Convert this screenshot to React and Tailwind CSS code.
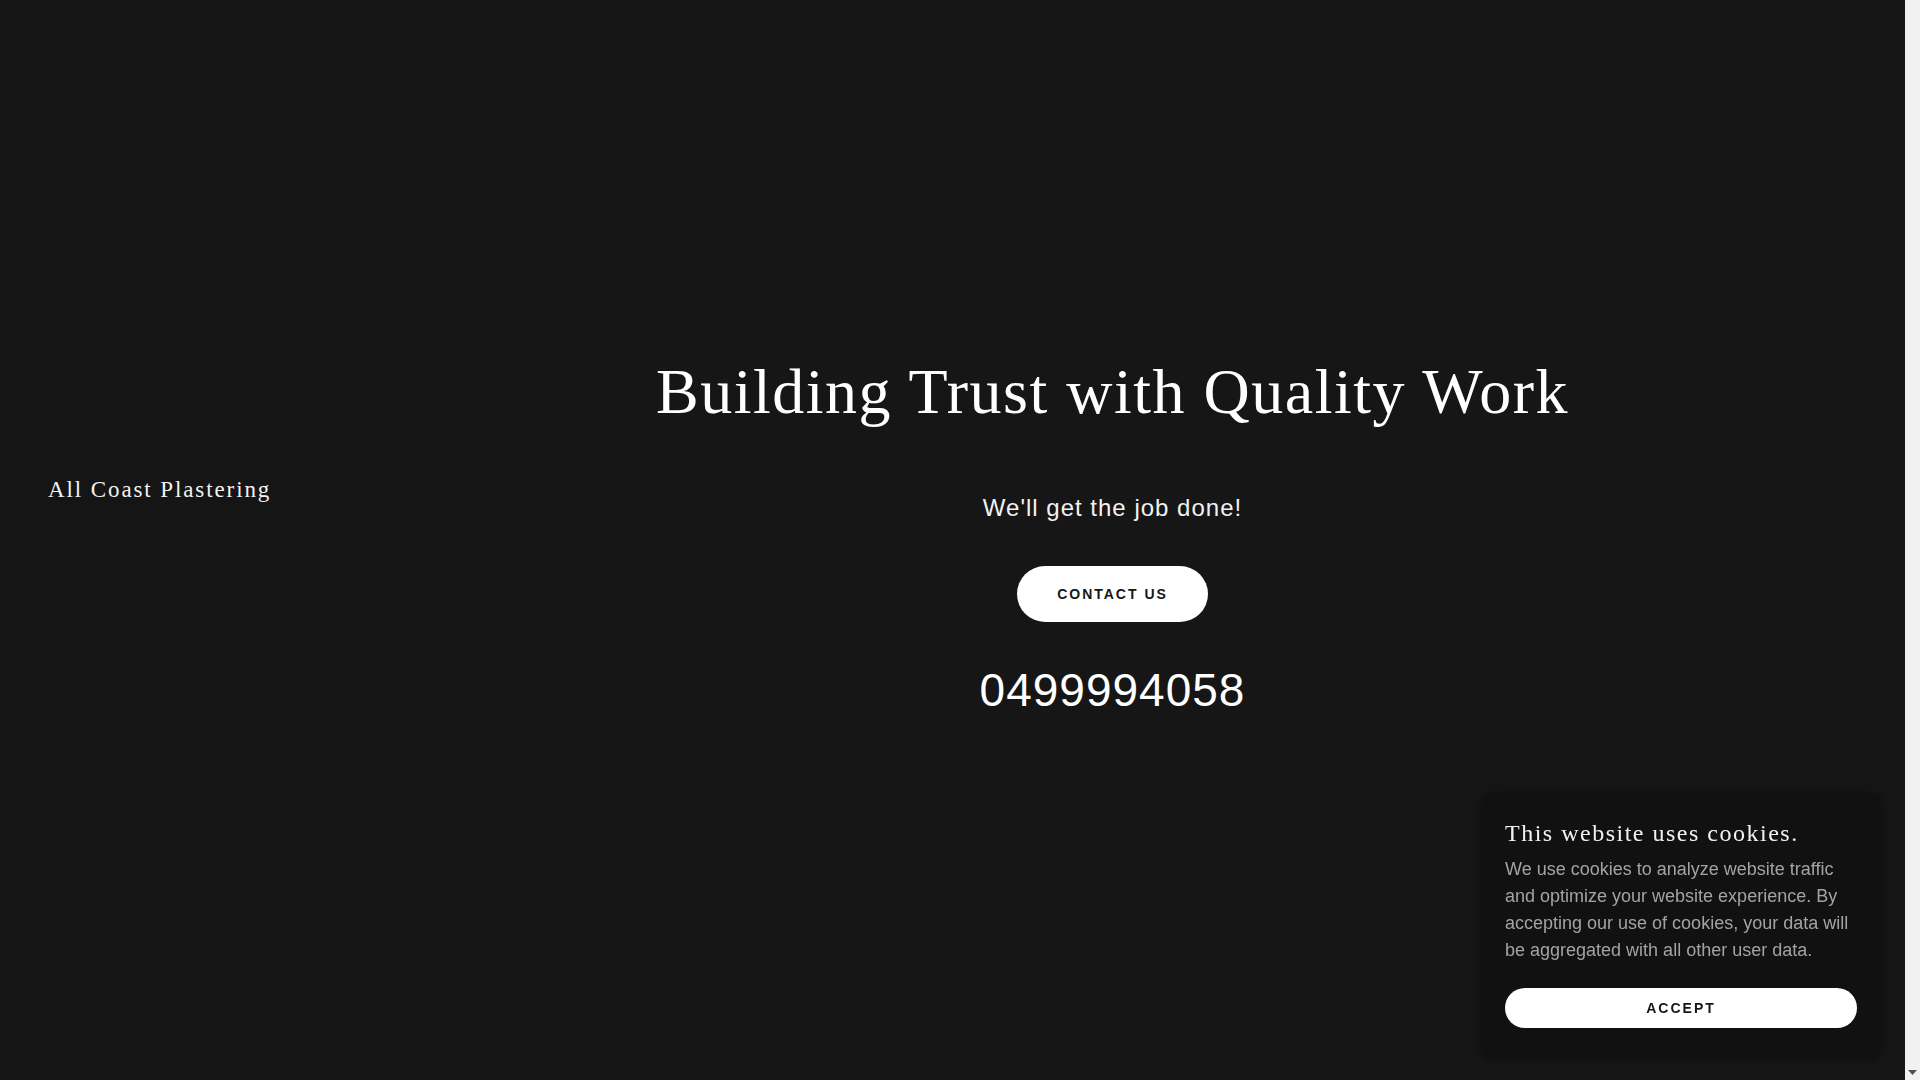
import React from 'react'

const serif = { fontFamily: '"Liberation Serif", "Times New Roman", serif' }

function Sidebar() {
  return (
    <aside className="w-[320px] shrink-0 bg-[#151515] pt-[473px] pl-[48px]">
      <div className="text-[23px] leading-[33px] tracking-[1.9px] text-[#f2f2f2] font-['Liberation_Serif',serif]">
        All Coast Plastering
      </div>
    </aside>
  )
}

function Hero() {
  return (
    <main className="flex-1 flex flex-col items-center pt-[353px] font-['Liberation_Sans',Arial,sans-serif]">
      <h1 className="text-[64px] leading-[77px] tracking-[1.5px] text-white font-normal font-['Liberation_Serif',serif]">
        Building Trust with Quality Work
      </h1>
      <p className="mt-[60px] text-[24px] leading-[36px] tracking-[1px] text-[#f2f2f2]">
        We'll get the job done!
      </p>
      <button className="mt-[40px] h-[56px] w-[191px] rounded-full bg-white text-[14px] font-bold tracking-[2px] text-[#161616]">
        CONTACT US
      </button>
      <div className="mt-[41px] text-[46px] leading-[55px] tracking-[1px] text-white">
        0499994058
      </div>
    </main>
  )
}

function Scrollbar() {
  return (
    <div className="w-[15px] shrink-0 bg-[#f1f1f1] flex flex-col justify-end items-center pb-[4px]">
      <svg width="9" height="6" viewBox="0 0 9 6">
        <path d="M0 0 H9 L4.5 5 Z" fill="#505050" />
      </svg>
    </div>
  )
}

function CookieBanner() {
  return (
    <div className="fixed right-[39px] bottom-[23px] w-[399px] rounded-lg bg-[#111111] shadow-[0_2px_12px_rgba(0,0,0,0.35)] px-[23px] pt-[25px] pb-[29px] font-['Liberation_Sans',Arial,sans-serif]">
      <h2 className="text-[24px] leading-[30px] tracking-[1.5px] text-[#f2f2f2] font-normal" style={serif}>
        This website uses cookies.
      </h2>
      <p className="mt-[8px] text-[18px] leading-[27px] text-[#a3a3a3]">
        We use cookies to analyze website traffic and optimize your website experience. By accepting our use of cookies, your data will be aggregated with all other user data.
      </p>
      <button className="mt-[24px] h-[40px] w-[352px] rounded-full bg-white text-[14px] font-bold tracking-[2px] text-[#161616]">
        ACCEPT
      </button>
    </div>
  )
}

export default function App() {
  return (
    <div className="flex h-screen overflow-hidden bg-[#161616]">
      <Sidebar />
      <Hero />
      <Scrollbar />
      <CookieBanner />
    </div>
  )
}
